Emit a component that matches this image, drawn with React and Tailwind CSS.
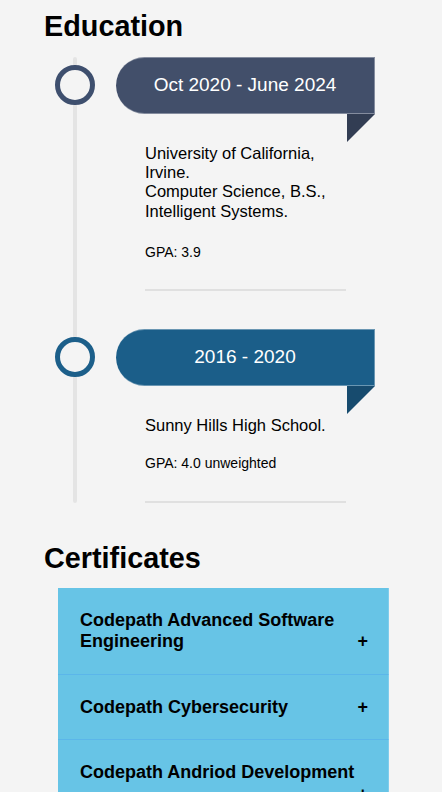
import React from 'react';

const education = [
    {
        dates: 'Oct 2020 - June 2024',
        ribbon: 'bg-[#424f6a]',
        ring: 'border-[#3e4f6e]',
        fold: 'border-t-[#323d53]',
        lines: ['University of California, Irvine.', 'Computer Science, B.S., Intelligent Systems.'],
        gpa: 'GPA: 3.9',
        gpaGap: 'mt-[23px]',
    },
    {
        dates: '2016 - 2020',
        ribbon: 'bg-[#1b5e89]',
        ring: 'border-[#1c5f8a]',
        fold: 'border-t-[#174b6e]',
        lines: ['Sunny Hills High School.'],
        gpa: 'GPA: 4.0 unweighted',
        gpaGap: 'mt-[20px]',
    },
];

const certificates = [
    'Codepath Advanced Software Engineering',
    'Codepath Cybersecurity',
    'Codepath Andriod Development',
];

const TimelineItem = ({ item }) => (
    <div className="flex">
        {/* ring over the timeline rail */}
        <div className="relative z-10 w-[72px] shrink-0 pl-[11px] pt-[8px]">
            <div className={`h-10 w-10 rounded-full border-[5px] bg-[#f4f4f4] ${item.ring}`} />
        </div>

        <div className="flex w-[259px] flex-col">
            <div className={`flex h-[57px] items-center justify-center rounded-l-full border-y border-r border-white/35 text-[19px] text-white ${item.ribbon}`}>
                {item.dates}
            </div>
            <div className={`h-0 w-0 self-end border-r-[28px] border-t-[28px] border-r-transparent ${item.fold}`} />

            <div className="mt-[2px] px-[29px]">
                <p className="text-[16.5px] leading-[19.2px]">
                    {item.lines.map((line, i) => (
                        <React.Fragment key={i}>
                            {i > 0 && <br />}
                            {line}
                        </React.Fragment>
                    ))}
                </p>
                <p className={`text-[14px] leading-[16.3px] ${item.gpaGap}`}>{item.gpa}</p>
                <div className="mt-[29px] h-[2px] bg-[#e0e0e0]" />
            </div>
        </div>
    </div>
);

const App = () => {
    return (
        <div className="min-h-screen bg-[#f4f4f4] px-[44px] pt-[10px] font-['Liberation_Sans',Arial,sans-serif] text-black">
            <h2 className="text-[28.8px] font-bold leading-[32px]">Education</h2>

            <div className="relative mt-[15px]">
                <div className="absolute bottom-0 left-[29px] top-0 w-1 rounded-full bg-[#e4e4e4]" />
                <div className="flex flex-col gap-[38px]">
                    {education.map((item) => (
                        <TimelineItem key={item.dates} item={item} />
                    ))}
                </div>
            </div>

            <h2 className="mt-[39px] text-[28.8px] font-bold leading-[32px]">Certificates</h2>

            <div className="ml-[14px] mt-[14px] w-[331px]">
                {certificates.map((title) => (
                    <div
                        key={title}
                        className="flow-root border-b border-r border-b-[#5bb6ea] border-r-[#80cdec] bg-[#67c4e6] pb-[21px] pl-[22px] pr-[20px] pt-[22px] text-[18px] font-bold leading-[1.2]"
                    >
                        {title}<span className="float-right ml-[6px]">+</span>
                    </div>
                ))}
            </div>
        </div>
    );
};

export default App;
